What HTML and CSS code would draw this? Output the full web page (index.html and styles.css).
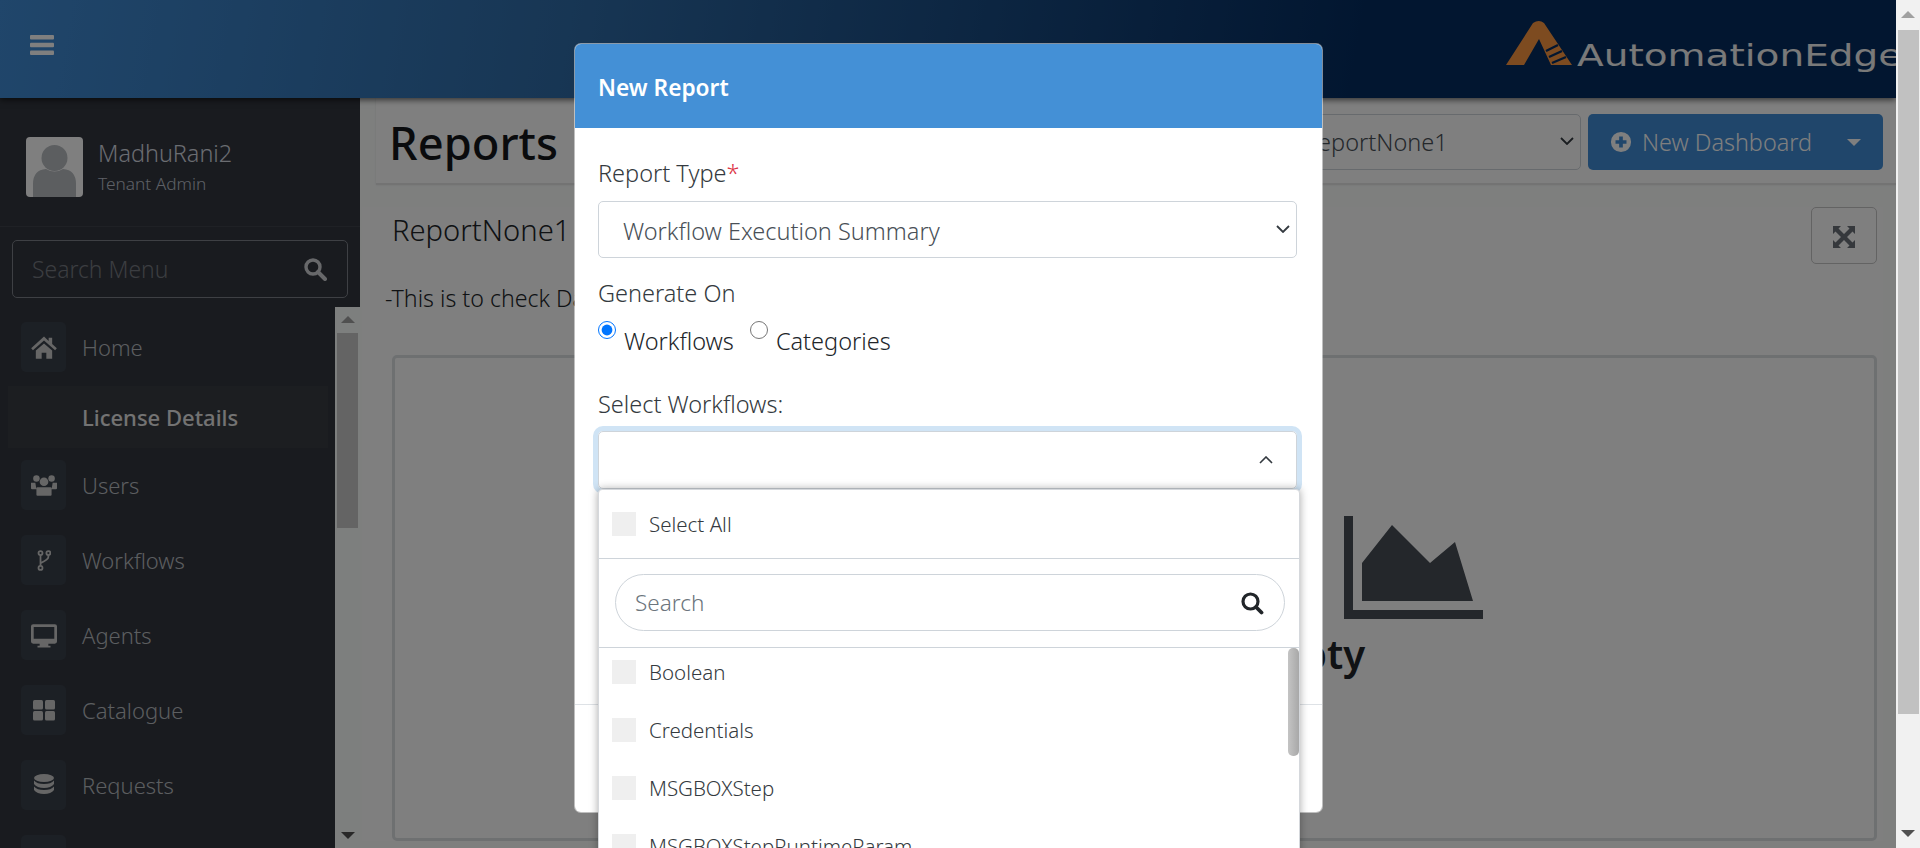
FILE: index.html
```html
<!doctype html>
<html lang="en-us">

<head>
    <title>AutomationEdge | Reports</title>
    <meta charset="utf-8" />
    <link rel="stylesheet" href="styles.css">
</head>

<body>
    <div class="page">
        <header class="topbar">
            <svg class="menu-toggle" viewBox="0 0 24 20" width="24" height="20"><rect y="0" width="24" height="4.4" rx="1"/><rect y="7.8" width="24" height="4.4" rx="1"/><rect y="15.6" width="24" height="4.4" rx="1"/></svg>
            <div class="logo">
                <svg class="logo-mark" viewBox="0 0 66 45" width="66" height="45">
                    <path fill="#fb9640" d="M0 45 27 3Q33-1 38 3L66 45H45L33 19 18 45Z"/>
                    <path stroke="#042c60" stroke-width="2.4" d="M40 31 52 25M43 37 56 31M46 43 60 37"/>
                </svg>
                <span class="logo-text">AutomationEdge</span>
            </div>
        </header>

        <div class="layout">
            <aside class="sidebar">
                <div class="profile">
                    <svg class="avatar" viewBox="0 0 57 60" width="57" height="60">
                        <rect width="57" height="60" rx="4" fill="#fff"/>
                        <circle cx="28.5" cy="21" r="13" fill="#b8bcc0"/>
                        <path fill="#b8bcc0" d="M7 60V47Q7 33 20 32 28.500 37 37 32 50 33 50 47V60Z"/>
                    </svg>
                    <div>
                        <div class="profile-name">MadhuRani2</div>
                        <div class="profile-role">Tenant Admin</div>
                    </div>
                </div>
                <div class="menu-search">
                    <span>Search Menu</span>
                    <svg viewBox="0 0 24 24" width="24" height="24"><circle cx="10" cy="10" r="7" fill="none" stroke="currentColor" stroke-width="3.4"/><path d="M15 15 22 22" stroke="currentColor" stroke-width="4" stroke-linecap="round"/></svg>
                </div>
                <div class="menu-area">
                    <nav class="menu">
                        <a class="menu-item">
                            <span class="menu-icon"><svg viewBox="0 0 24 24" width="28" height="28"><path d="M12 3 1 13l1.500 1.800L12 6.500l9.500 8.300L23 13l-4-3.600V4h-3v2.800zM5 15l7-6 7 6v7h-5v-5h-4v5H5z"/></svg></span>
                            Home
                        </a>
                        <a class="menu-item sub-item active">License Details</a>
                        <a class="menu-item">
                            <span class="menu-icon"><svg viewBox="0 0 24 24" width="26" height="26"><circle cx="5" cy="6" r="3"/><circle cx="19" cy="6" r="3"/><circle cx="12" cy="9" r="4"/><path d="M0 10h4l1 6H1q-1 0-1-1zM24 10h-4l-1 6h4q1 0 1-1zM6 14h12q1 0 1 1v6q0 1-1 1H6q-1 0-1-1v-6q0-1 1-1z"/></svg></span>
                            Users
                        </a>
                        <a class="menu-item">
                            <span class="menu-icon"><svg viewBox="0 0 16 24" width="14" height="21" fill="none" stroke="currentColor" stroke-width="2"><circle cx="4" cy="3.500" r="2.300"/><circle cx="4" cy="20.500" r="2.300"/><circle cx="13" cy="3.500" r="2.300"/><path d="M4 6v12M13 6v2Q13 11 4 15"/></svg></span>
                            Workflows
                        </a>
                        <a class="menu-item">
                            <span class="menu-icon"><svg viewBox="0 0 24 24" width="26" height="26"><path fill-rule="evenodd" d="M2 2h20q2 0 2 2v14q0 2-2 2h-6v2h2v1.500H6V22h2v-2H2q-2 0-2-2V4q0-2 2-2zm.500 2.500v11h19v-11z"/></svg></span>
                            Agents
                        </a>
                        <a class="menu-item">
                            <span class="menu-icon"><svg viewBox="0 0 24 24" width="24" height="24"><rect x="1" y="2" width="10" height="9.500" rx="1.500"/><rect x="13" y="2" width="10" height="9.500" rx="1.500"/><rect x="1" y="13" width="10" height="9.500" rx="1.500"/><rect x="13" y="13" width="10" height="9.500" rx="1.500"/></svg></span>
                            Catalogue
                        </a>
                        <a class="menu-item">
                            <span class="menu-icon"><svg viewBox="0 0 24 24" width="24" height="26"><ellipse cx="12" cy="5" rx="10" ry="4"/><path d="M2 7.500Q5 11 12 11T22 7.500V11Q19 15 12 15T2 11zM2 13.500Q5 17 12 17T22 13.500V17Q19 21 12 21T2 17z"/></svg></span>
                            Requests
                        </a>
                        <a class="menu-item">
                            <span class="menu-icon"></span>
                        </a>
                    </nav>
                    <div class="side-scroll">
                        <span class="arrow-up"></span>
                        <div class="side-thumb"></div>
                        <span class="arrow-down"></span>
                    </div>
                </div>
            </aside>

            <main class="content">
                <div class="title-bar">
                    <h1>Reports</h1>
                    <div class="select-wrap dash-select">
                        <select><option>ReportNone1</option></select>
                        <svg class="chevron" viewBox="0 0 14 8" width="14" height="8"><path d="M1 1 7 7 13 1" fill="none" stroke="#343a40" stroke-width="1.800"/></svg>
                    </div>
                    <button class="dash-btn">
                        <svg viewBox="0 0 24 24" width="22" height="22"><path fill-rule="evenodd" d="M12 1a11 11 0 1 0 0 22 11 11 0 0 0 0-22zM10 6h4v4h4v4h-4v4h-4v-4H6v-4h4z"/></svg>
                        <span>New Dashboard</span>
                        <i class="caret"></i>
                    </button>
                </div>

                <section class="report-card">
                    <div class="card-head">
                        <h2>ReportNone1</h2>
                        <button class="expand-btn">
                            <svg viewBox="0 0 24 24" width="24" height="24"><path d="M1 1h8L6.500 3.500 12 9l5.500-5.500L15 1h8v8l-2.500-2.500L15 12l5.500 5.500L23 15v8h-8l2.500-2.500L12 15l-5.500 5.500L9 23H1v-8l2.500 2.500L9 12 3.500 6.500 1 9z"/></svg>
                        </button>
                    </div>
                    <p class="report-desc">-This is to check Dashboard</p>
                    <div class="report-box">
                        <svg class="empty-chart" viewBox="0 0 139 103" width="139" height="103">
                            <path d="M0 0H9V94H139V103H0Z"/>
                            <path d="M18 47 48 9 86 47 111 26 129 85H18Z"/>
                        </svg>
                        <div class="empty-text">This Dashboard is empty</div>
                    </div>
                </section>
            </main>
        </div>

        <div class="overlay">
            <div class="modal">
                <div class="modal-head">New Report</div>
                <div class="modal-body">
                    <label class="field-label">Report Type<span class="req">*</span></label>
                    <div class="select-wrap type-select">
                        <select><option>Workflow Execution Summary</option></select>
                        <svg class="chevron" viewBox="0 0 14 8" width="14" height="8"><path d="M1 1 7 7 13 1" fill="none" stroke="#343a40" stroke-width="1.800"/></svg>
                    </div>
                    <label class="field-label gen-label">Generate On</label>
                    <div class="radio-row">
                        <label><input type="radio" name="gen" checked>Workflows</label>
                        <label><input type="radio" name="gen">Categories</label>
                    </div>
                    <label class="field-label wf-label">Select Workflows:</label>
                    <div class="multi-select">
                        <svg viewBox="0 0 14 8" width="14" height="8"><path d="M1 7 7 1 13 7" fill="none" stroke="#343a40" stroke-width="1.600"/></svg>
                        <div class="dropdown">
                            <div class="select-all"><i class="check"></i>Select All</div>
                            <div class="search-wrap">
                                <div class="search-box">
                                    <span>Search</span>
                                    <svg viewBox="0 0 24 24" width="24" height="24"><circle cx="10.500" cy="10.500" r="7.500" fill="none" stroke="#212529" stroke-width="3.200"/><path d="M16 16 21.500 21.500" stroke="#212529" stroke-width="3.800" stroke-linecap="round"/></svg>
                                </div>
                            </div>
                            <div class="options">
                                <div class="option"><i class="check"></i>Boolean</div>
                                <div class="option"><i class="check"></i>Credentials</div>
                                <div class="option"><i class="check"></i>MSGBOXStep</div>
                                <div class="option"><i class="check"></i>MSGBOXStepRuntimeParam</div>
                                <div class="list-thumb"></div>
                            </div>
                        </div>
                    </div>
                </div>
                <div class="modal-foot"></div>
            </div>
        </div>
    </div>

    <div class="page-scroll">
        <span class="arrow-up"></span>
        <div class="page-thumb"></div>
        <span class="arrow-down"></span>
    </div>
</body>

</html>
```

FILE: styles.css
```css
* {
    box-sizing: border-box;
}

html,
body {
    height: 100%;
    margin: 0;
    overflow: hidden;
}

body {
    display: flex;
    font-family: "Noto Sans", "Open Sans", sans-serif;
    font-weight: 350;
    color: #212529;
    background-color: #fff;
}

.page {
    position: relative;
    width: 1896px;
    height: 848px;
    overflow: hidden;
}

/* top bar */
.topbar {
    height: 98px;
    display: flex;
    align-items: center;
    padding-left: 30px;
    background: linear-gradient(100deg, #408cd6 0%, #2f6ca8 30%, #042c60 72%, #042c60 100%);
    box-shadow: 0 2px 6px rgba(0, 0, 0, 0.6);
    position: relative;
    overflow: hidden;
}

.menu-toggle {
    fill: #fff;
    margin-top: -9px;
}

.logo {
    margin-left: auto;
    width: 390px;
    flex-shrink: 0;
    display: flex;
    align-items: flex-end;
    gap: 5px;
    margin-top: -13px;
}

.logo-text {
    font-family: "DejaVu Sans", sans-serif;
    font-size: 30px;
    font-weight: 400;
    line-height: 30px;
    color: #f2f2f2;
    white-space: nowrap;
    margin-bottom: -6px;
    transform: scaleX(1.3);
    transform-origin: left center;
}

.layout {
    display: flex;
    height: 750px;
}

/* sidebar */
.sidebar {
    width: 360px;
    flex-shrink: 0;
    background-color: #32363e;
    display: flex;
    flex-direction: column;
}

.profile {
    height: 129px;
    padding: 39px 0 0 26px;
    display: flex;
    gap: 15px;
    border-bottom: 1px solid #3e424a;
}

.profile-name {
    font-size: 23.4px;
    line-height: 28px;
    margin-top: 2px;
    color: #d6dae2;
}

.profile-role {
    font-size: 17.3px;
    line-height: 22px;
    margin-top: 6px;
    color: #bcc0cc;
}

.menu-search {
    margin: 13px 12px 0;
    height: 58px;
    padding: 0 20px 0 19px;
    display: flex;
    align-items: center;
    justify-content: space-between;
    border: 1px solid #7c8088;
    border-radius: 5px;
    font-size: 22.9px;
    color: #777b82;
}

.menu-search svg {
    color: #cfd1d4;
}

.menu-area {
    flex: 1;
    display: flex;
    margin-top: 9px;
    min-height: 0;
    overflow: hidden;
}

.menu {
    flex: 1;
    padding-top: 15px;
}

.menu-item {
    display: flex;
    align-items: center;
    gap: 16px;
    height: 50px;
    margin-bottom: 25px;
    padding-left: 21px;
    font-size: 22px;
    font-weight: 300;
    color: #b8bcc0;
}

.menu-icon {
    width: 45px;
    height: 50px;
    display: flex;
    align-items: center;
    justify-content: center;
    background-color: #39404a;
    border-radius: 5px;
    fill: #cccccc;
    color: #cccccc;
}

.sub-item {
    margin: -11px 0 12px 8px;
    padding-left: 74px;
    height: 62px;
    width: 320px;
    background-color: #383c42;
}

.active {
    color: #e6e6e6;
    font-weight: 500;
}

.side-scroll {
    width: 25px;
    flex-shrink: 0;
    background-color: #fbfffd;
    display: flex;
    flex-direction: column;
    align-items: center;
    padding-top: 9px;
}

.side-thumb {
    width: 21px;
    height: 195px;
    margin-top: 10px;
    background-color: #c8c8c8;
}

.side-scroll .arrow-down {
    margin-top: auto;
    margin-bottom: 9px;
}

.arrow-up {
    border-left: 7px solid transparent;
    border-right: 7px solid transparent;
    border-bottom: 7px solid #a0a0a0;
}

.arrow-down {
    border-left: 7px solid transparent;
    border-right: 7px solid transparent;
    border-top: 7px solid #505050;
}

/* page content */
.content {
    flex: 1;
    background-color: #fcfefd;
    min-width: 0;
}

.title-bar {
    margin-left: 16px;
    height: 87px;
    padding: 18px 13px 0 13px;
    display: flex;
    align-items: flex-start;
    gap: 7px;
    background-color: #fff;
    border-bottom: 2px solid #e6e6e6;
    box-shadow: 0 0 2px rgba(0, 0, 0, 0.1);
}

h1 {
    margin: 0 auto 0 0;
    font-size: 45.3px;
    line-height: 54px;
    font-weight: 500;
    color: #14171a;
}

.select-wrap {
    position: relative;
}

.select-wrap select {
    width: 100%;
    height: 100%;
    appearance: none;
    background-color: transparent;
    border: 1px solid #ced4da;
    border-radius: 5px;
    font-family: inherit;
    font-weight: inherit;
    font-size: 23.5px;
    color: #495057;
}

.chevron {
    position: absolute;
    right: 7px;
    top: 50%;
    margin-top: -5px;
}

.dash-select {
    width: 320px;
    height: 56px;
    margin-top: -2px;
}

.dash-select select {
    padding-left: 42px;
}

.dash-btn {
    width: 295px;
    height: 56px;
    margin-top: -2px;
    display: flex;
    align-items: center;
    gap: 10px;
    padding: 0 22px;
    background-color: #408cd6;
    border: none;
    border-radius: 5px;
    color: #fff;
    fill: #fff;
    font-family: inherit;
    font-weight: inherit;
    font-size: 23.4px;
}

.caret {
    margin-left: auto;
    border-left: 7px solid transparent;
    border-right: 7px solid transparent;
    border-top: 7px solid #fff;
}

.report-card {
    margin: 22px 13px 0 2px;
    padding: 0 6px 0 30px;
    background-color: #ffffff;
}

.card-head {
    height: 57px;
    display: flex;
    align-items: center;
    justify-content: space-between;
}

h2 {
    margin: 0 0 12px;
    font-size: 29.2px;
    font-weight: 350;
}

.expand-btn {
    width: 66px;
    height: 57px;
    padding: 6px 0 0;
    background: none;
    border: 1px solid #c6c6c6;
    border-radius: 5px;
    fill: #6a7078;
}

.report-desc {
    margin: 20px 0 0 -7px;
    font-size: 23.2px;
    line-height: 28px;
    white-space: nowrap;
}

.report-box {
    margin-top: 43px;
    height: 486px;
    padding: 158px 0 0 949px;
    border: 3px solid #dde0e3;
    border-radius: 5px;
}

.empty-chart {
    display: block;
    fill: #484e56;
}

.empty-text {
    width: 400px;
    margin-left: -458px;
    margin-top: 11px;
    text-align: right;
    font-size: 40px;
    line-height: 48px;
    font-weight: 600;
    white-space: nowrap;
}

/* modal */
.overlay {
    position: absolute;
    inset: 0;
    background-color: rgba(0, 0, 0, 0.5);
}

.modal {
    position: absolute;
    left: 575px;
    top: 44px;
    width: 747px;
    height: 768px;
    display: flex;
    flex-direction: column;
    background-color: #fff;
    border-radius: 6px;
    box-shadow: 0 0 0 1px rgba(255, 255, 255, 0.5);
}

.modal-head {
    height: 84px;
    padding: 2px 0 0 23px;
    display: flex;
    align-items: center;
    background-color: #4490d6;
    border-radius: 6px 6px 0 0;
    color: #fff;
    font-size: 22.7px;
    font-weight: 600;
}

.modal-body {
    flex: 1;
    padding: 30px 25px 0 23px;
}

.field-label {
    display: block;
    font-size: 23.5px;
    line-height: 30px;
    color: #343a40;
}

.req {
    color: #dc3545;
}

.type-select {
    margin-top: 13px;
    height: 57px;
}

.type-select select {
    padding: 2px 0 0 24px;
}

.gen-label {
    margin-top: 20px;
}

.radio-row {
    display: flex;
    gap: 16px;
    height: 36px;
    margin-top: 8px;
    font-size: 23.5px;
}

.radio-row input {
    width: 18px;
    height: 18px;
    margin: 5px 8px 0 0;
    flex-shrink: 0;
}

.radio-row label {
    line-height: 50px;
    height: 36px;
    display: flex;
}

.wf-label {
    margin-top: 37px;
}

.multi-select {
    position: relative;
    margin-top: 12px;
    height: 58px;
    display: flex;
    align-items: center;
    justify-content: flex-end;
    padding-right: 23px;
    border: 1px solid #ced4da;
    border-radius: 5px;
    box-shadow: 0 0 0 5px #d0e4f5;
}

.dropdown {
    position: absolute;
    left: -1px;
    top: calc(100% + 1px);
    width: 702px;
    height: 400px;
    background-color: #fff;
    border: 1px solid #d5d8dc;
    border-radius: 4px;
    box-shadow: 0 0 8px rgba(0, 0, 0, 0.35);
    font-size: 20.5px;
    color: #343a40;
}

.check {
    width: 24px;
    height: 24px;
    flex-shrink: 0;
    background-color: #efefef;
}

.select-all {
    height: 69px;
    padding-left: 13px;
    display: flex;
    align-items: center;
    gap: 13px;
    border-bottom: 1px solid #ced4da;
}

.search-wrap {
    height: 89px;
    padding: 15px 14px 0 16px;
    border-bottom: 1px solid #ced4da;
}

.search-box {
    height: 57px;
    padding: 0 20px 0 19px;
    display: flex;
    align-items: center;
    justify-content: space-between;
    border: 1px solid #ced4da;
    border-radius: 29px;
    font-size: 22.5px;
    color: #6c757d;
}

.options {
    position: relative;
    display: flex;
    flex-direction: column;
    gap: 10px;
}

.option {
    height: 48px;
    padding-left: 13px;
    display: flex;
    align-items: center;
    gap: 13px;
    white-space: nowrap;
}

.list-thumb {
    position: absolute;
    right: 0;
    top: 0;
    width: 11px;
    height: 108px;
    background: linear-gradient(90deg, #c4c4c4, #a8a8a8);
    border-radius: 5px;
}

.modal-foot {
    height: 108px;
    border-top: 1px solid #dee2e6;
}

/* page scrollbar */
.page-scroll {
    width: 24px;
    height: 848px;
    flex-shrink: 0;
    background-color: #f1f1f1;
    display: flex;
    flex-direction: column;
    align-items: center;
    padding-top: 11px;
}

.page-thumb {
    width: 21px;
    height: 684px;
    margin-top: 12px;
    background-color: #c1c1c1;
}

.page-scroll .arrow-down {
    margin-top: auto;
    margin-bottom: 11px;
}
```
